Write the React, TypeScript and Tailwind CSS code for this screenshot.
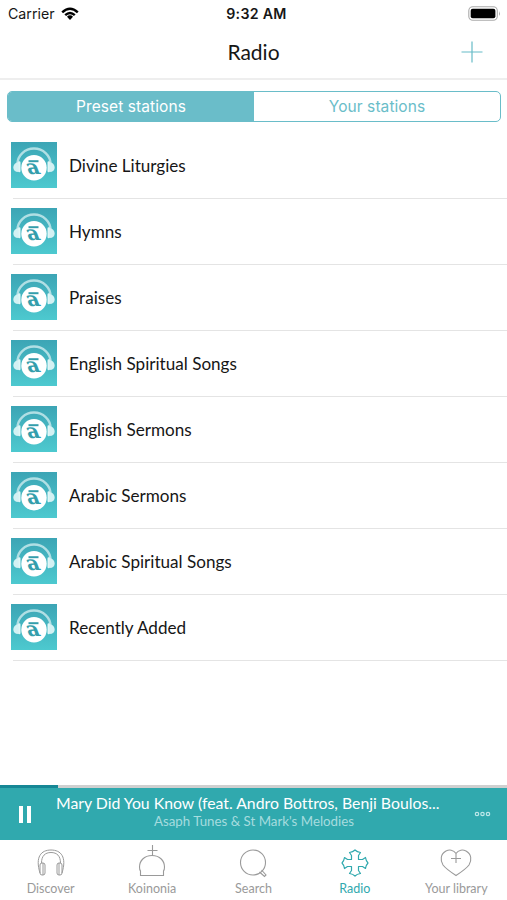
import React, { useState } from 'react';

const stations = [
  'Divine Liturgies',
  'Hymns',
  'Praises',
  'English Spiritual Songs',
  'English Sermons',
  'Arabic Sermons',
  'Arabic Spiritual Songs',
  'Recently Added',
];

const StationArt: React.FC = () => (
  <svg width="46" height="46" viewBox="0 0 46 46" className="shrink-0">
    <defs>
      <linearGradient id="art" x1="0" y1="0" x2="0" y2="1">
        <stop offset="0" stopColor="#3ca5b5" />
        <stop offset="1" stopColor="#4dc9cf" />
      </linearGradient>
    </defs>
    <rect width="46" height="46" fill="url(#art)" />
    <path d="M6.500 22A16.500 15.500 0 0 1 39.500 22" fill="none" stroke="#b0dfe4" strokeWidth="2.400" />
    <path d="M7.500 20v10C4 30 2.300 28 2.300 25.500S4 20.500 7.500 20zM38.500 20v10c3.500 0 5.200-2 5.200-4.500s-1.700-5-5.200-5.500z" fill="#d3f1f3" />
    <path d="M8.300 20.500v8.500M37.700 20.500v8.500" stroke="#e0f6f7" strokeWidth="2.400" strokeLinecap="round" />
    <circle cx="23" cy="25.700" r="12.700" fill="#fff" />
    <path d="M17.500 19.200h10" stroke="#349eac" strokeWidth="2" />
    <text x="0" y="0" transform="translate(24 32) skewX(20)" textAnchor="middle" fill="#349eac" className="font-['DejaVu_Serif',serif] text-[20px] font-bold">a</text>
  </svg>
);

const HeadphonesIcon = () => (
  <svg width="30" height="30" viewBox="0 0 30 30" fill="none" stroke="currentColor" strokeWidth="1">
    <path d="M4 25C-1 9 5 2 15 2s16 7 11 23M5.500 15C5.500 8 9 4.500 15 4.500S24.500 8 24.500 15" />
    <path d="M4 17q0-2 2-2h1q2 0 2 2v8q0 2-2 2H6q-2 0-2-2zM21 17q0-2 2-2h1q2 0 2 2v8q0 2-2 2h-1q-2 0-2-2zM7 15v12M23 15v12" />
  </svg>
);

const ChurchIcon = () => (
  <svg width="30" height="34" viewBox="0 0 30 34" fill="none" stroke="currentColor" strokeWidth="1.100">
    <path d="M15.500 1v11M10.500 6.500h10" />
    <path d="M3.500 31.500V27Q2.500 26 2.500 23C2.500 17 7 11.500 15 11.500S27.500 17 27.500 23q0 3-1 4v4.500z" />
  </svg>
);

const SearchIcon = () => (
  <svg width="30" height="30" viewBox="0 0 30 30" fill="none" stroke="currentColor" strokeWidth="1.100">
    <circle cx="15" cy="14.500" r="12.500" />
    <path d="M21.500 24l5 4.500 1.500-1.500-4.500-5" />
  </svg>
);

const CrossIcon = () => (
  <svg width="30" height="30" viewBox="0 0 30 30" fill="none" stroke="currentColor" strokeWidth="1.200" strokeLinejoin="round">
    <path d="M9.500 4.500Q13 4 15 2Q17 4 20.500 4.500L18.500 7.500V11.500H22.500L25.500 9.500Q26 13 28 15Q26 17 25.500 20.500L22.500 18.500H18.500V22.500L20.500 25.500Q17 26 15 28Q13 26 9.500 25.500L11.500 22.500V18.500H7.500L4.500 20.500Q4 17 2 15Q4 13 4.500 9.500L7.500 11.500H11.500V7.500Z" />
  </svg>
);

const HeartIcon = () => (
  <svg width="32" height="30" viewBox="0 0 32 30" fill="none" stroke="currentColor" strokeWidth="1.100">
    <path d="M16 5.500C13.500 1.500 9 1.500 6 3C.5 6 0 12 3 17Q6 21 16 27.500Q26 21 29 17C32 12 31.500 6 26 3C23 1.500 18.500 1.500 16 5.500V15M11 10.500h10" />
  </svg>
);

const tabs = [
  { name: 'Discover', icon: <HeadphonesIcon /> },
  { name: 'Koinonia', icon: <ChurchIcon /> },
  { name: 'Search', icon: <SearchIcon /> },
  { name: 'Radio', icon: <CrossIcon /> },
  { name: 'Your library', icon: <HeartIcon /> },
];

const App: React.FC = () => {
  const [showPresets, setShowPresets] = useState(true);
  const [activeTab, setActiveTab] = useState('Radio');

  return (
    <div className="w-[507px] h-[900px] flex flex-col overflow-hidden bg-white font-['Lato',sans-serif] text-[#161616]">
      {/* Status bar */}
      <div className="h-[27px] shrink-0 grid grid-cols-3 items-center pl-2 pr-1.5 font-['Inter',sans-serif] text-sm">
        <div className="flex items-center gap-1.5 pt-px">
          <span className="text-[14.200px]">Carrier</span>
          <svg width="18" height="14" viewBox="0 0 18 14" fill="none" stroke="#000" strokeWidth="2.400">
            <path d="M1.200 5.300Q9-2 16.800 5.300M4.200 8.200Q9 3.800 13.800 8.200" />
            <path d="M9 8.300q1.800 0 3 1.400L9 13 6 9.700q1.200-1.400 3-1.400z" fill="#000" stroke="none" />
          </svg>
        </div>
        <span className="pt-px pl-1 text-center font-semibold text-[14.200px] tracking-[0.02em]">9:32 AM</span>
        <svg className="justify-self-end" width="33" height="15" viewBox="0 0 33 15">
          <rect x=".8" y=".8" width="28.500" height="13.400" rx="4" fill="#fff" stroke="#aaa" strokeWidth="1.100" />
          <rect x="2.700" y="2.800" width="24.700" height="9.400" rx="2" fill="#000" />
          <path d="M31 5q1.500 2.500 0 5z" fill="#999" />
        </svg>
      </div>

      {/* Header */}
      <header className="h-[53px] shrink-0 grid grid-cols-3 items-center pb-0.5 border-b-2 border-[#eeeeee]">
        <span />
        <h1 className="text-center text-[21px]">Radio</h1>
        <button className="justify-self-end mr-6" aria-label="Add station">
          <svg width="22" height="22" viewBox="0 0 22 22" stroke="#67bbc7" strokeWidth="1.200">
            <path d="M11 .5v21M.5 11h21" />
          </svg>
        </button>
      </header>

      {/* Preset / own stations switch */}
      <div className="h-[31px] shrink-0 mt-[11px] ml-[7px] mr-1.5 flex rounded-[5px] overflow-hidden border border-[#6abdc9] font-['Inter',sans-serif] text-[15.500px] tracking-[0.005em]">
        <button
          className={`flex-1 ${showPresets ? 'bg-[#6abdc9] text-white' : 'text-[#6abdc9]'}`}
          onClick={() => setShowPresets(true)}
        >
          Preset stations
        </button>
        <button
          className={`flex-1 ${showPresets ? 'text-[#6abdc9]' : 'bg-[#6abdc9] text-white'}`}
          onClick={() => setShowPresets(false)}
        >
          Your stations
        </button>
      </div>

      {/* Station list */}
      <ul className="flex-1 mt-[11px]">
        {stations.map(station => (
          <li key={station} className="h-[66px] pl-[11px] flex flex-col">
            <div className="flex-1 flex items-center gap-3 pb-px">
              <StationArt />
              <span className="pt-0.5 text-[17.100px]">{station}</span>
            </div>
            <div className="h-px ml-0.5 bg-[#e4e4e4]" />
          </li>
        ))}
      </ul>

      {/* Now playing */}
      <div className="h-[3px] shrink-0 bg-[#cfd0d0]">
        <div className="w-[58px] h-full bg-[#168795]" />
      </div>
      <div className="h-[52px] shrink-0 bg-[#30a9ae] flex items-center text-white">
        <button className="w-[50px] flex justify-center gap-1" aria-label="Pause">
          <span className="w-1 h-[17px] bg-white" />
          <span className="w-1 h-[17px] bg-white" />
        </button>
        <div className="w-[396px] ml-1.5 pb-1.5 text-center">
          <div className="text-left text-[15.800px] leading-5 whitespace-nowrap [font-variant-ligatures:none]">Mary Did You Know (feat. Andro Bottros, Benji Boulos...</div>
          <div className="text-[13.300px] leading-4 text-[#a6dcdf]">Asaph Tunes & St Mark's Melodies</div>
        </div>
        <svg className="ml-[22px]" width="17" height="6" viewBox="0 0 17 6" fill="none" stroke="#bde7e9" strokeWidth="1.200">
          <circle cx="3" cy="3" r="1.700" />
          <circle cx="8.500" cy="3" r="1.700" />
          <circle cx="14" cy="3" r="1.700" />
        </svg>
      </div>

      {/* Bottom tabs */}
      <nav className="h-[60px] shrink-0 grid grid-cols-5">
        {tabs.map(tab => (
          <button
            key={tab.name}
            className={`flex flex-col items-center ${activeTab === tab.name ? 'text-[#30a9ae]' : 'text-[#9a9a9a]'}`}
            onClick={() => setActiveTab(tab.name)}
          >
            <span className="h-[41px] flex items-end pb-[3px]">{tab.icon}</span>
            <span className="text-[12.500px] leading-4">{tab.name}</span>
          </button>
        ))}
      </nav>
    </div>
  );
};

export default App;
